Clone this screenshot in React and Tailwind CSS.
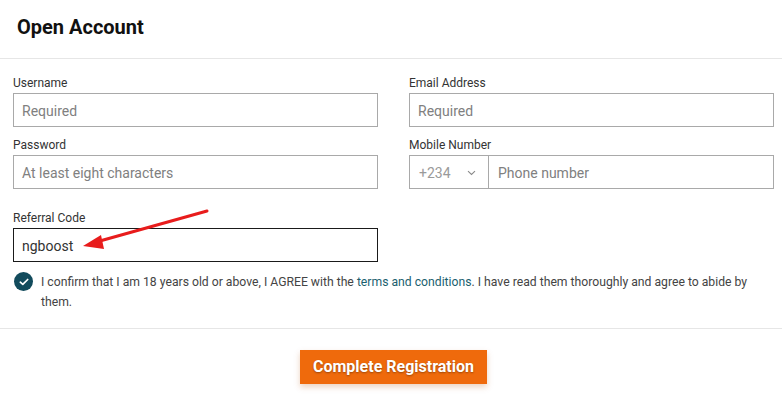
import React from "react";

function Field({ label, placeholder, value, dark }) {
  return (
    <div className="flex flex-col">
      <label className="text-[12px] leading-[16px] text-[#333] h-[17px] pt-[1px]">{label}</label>
      <div
        className={`mt-[2px] h-[34px] border ${dark ? "border-[#1a1a1a]" : "border-[#a9a9a9]"} flex items-center pl-[8px] pt-[2px] text-[14px] ${value ? "text-[#333]" : "text-[#808080]"}`}
      >
        {value || placeholder}
      </div>
    </div>
  );
}

export default function App() {
  return (
    <div className="w-[782px] h-[405px] bg-white overflow-hidden relative" style={{ fontFamily: "Roboto, 'Liberation Sans', sans-serif" }}>
      <div className="h-[59px] border-b border-[#e6e6e6] flex items-center pl-[17px]">
        <h1 className="text-[20px] font-bold text-[#111] leading-none -mt-[4px]">Open Account</h1>
      </div>
      <div className="pl-[13px] pr-[8px] pt-[15px]">
        <div className="grid grid-cols-[365px_365px] gap-x-[31px] gap-y-[9px]">
          <Field label="Username" placeholder="Required" />
          <Field label="Email Address" placeholder="Required" />
          <Field label="Password" placeholder="At least eight characters" />
          <div className="flex flex-col">
            <label className="text-[12px] leading-[16px] text-[#333] h-[17px] pt-[1px]">Mobile Number</label>
            <div className="mt-[2px] h-[34px] border border-[#a9a9a9] flex text-[14px]">
              <div className="w-[79px] border-r border-[#a9a9a9] flex items-center pl-[9px] pt-[2px] text-[#9a9a9a]">
                <span>+234</span>
                <svg className="ml-[16px]" width="9" height="6" viewBox="0 0 9 6" fill="none">
                  <path d="M1 1.2 L4.5 4.5 L8 1.2" stroke="#8a8a8a" strokeWidth="1.1" />
                </svg>
              </div>
              <div className="flex items-center pl-[9px] pt-[2px] text-[#808080]">Phone number</div>
            </div>
          </div>
        </div>
        <div className="w-[365px] mt-[20px]">
          <Field label="Referral Code" value="ngboost" dark />
        </div>
        <div className="flex items-start mt-[9px] pr-[10px]">
          <div className="w-[19px] h-[19px] rounded-full bg-[#124b5c] flex items-center justify-center shrink-0 mt-[1px] ml-[1px]">
            <svg width="10" height="8" viewBox="0 0 10 8" fill="none">
              <path d="M1.3 4.2 L3.8 6.4 L8.7 1.5" stroke="white" strokeWidth="1.7" strokeLinecap="round" strokeLinejoin="round" />
            </svg>
          </div>
          <p className="ml-[8px] text-[12.2px] leading-[20px] text-[#444] pt-[1px]">
            I confirm that I am 18 years old or above, I AGREE with the{" "}
            <span className="text-[#1b5f6f]">terms and conditions</span>. I have read them thoroughly and agree to abide by them.
          </p>
        </div>
      </div>
      <div className="mt-[16px] border-t border-[#e6e6e6] flex justify-center pt-[21px]">
        <button className="h-[34px] w-[187px] ml-[5px] bg-[#ef6a0c] text-white font-bold text-[16px] shadow-[0_3px_6px_rgba(180,80,0,0.25)] [text-shadow:0_1px_2px_rgba(0,0,0,0.35)]">
          Complete Registration
        </button>
      </div>
      <svg className="absolute left-0 top-0 pointer-events-none" width="782" height="405">
        <line x1="207" y1="211" x2="98" y2="241.5" stroke="#e81c1c" strokeWidth="3" strokeLinecap="round" />
        <polygon points="83,246 101,235 104,249" fill="#e81c1c" />
      </svg>
    </div>
  );
}
